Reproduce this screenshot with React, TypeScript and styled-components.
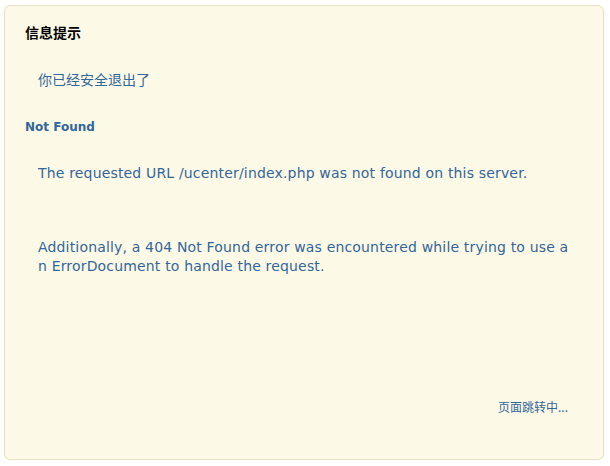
import styled, { createGlobalStyle } from 'styled-components';

const GlobalStyle = createGlobalStyle`
  html, body {
    margin: 0;
    padding: 0;
    background: #ffffff;
  }
  body {
    font-family: "DejaVu Sans", Verdana, "Noto Sans CJK SC", sans-serif;
  }
`;

const Page = styled.div`
  padding: 5px 0 0 4px;
`;

const MessageBox = styled.div`
  box-sizing: border-box;
  width: 600px;
  height: 455px;
  padding: 16px 20px 0 20px;
  display: flex;
  flex-direction: column;
  background: #fdf9e7;
  border: 1px solid #e6e1c6;
  border-radius: 6px;
`;

const Title = styled.h3`
  margin: 0;
  font-family: "Noto Sans CJK SC", sans-serif;
  font-size: 14px;
  line-height: 20px;
  font-weight: bold;
  color: #000;
`;

const Message = styled.div`
  margin: 27px 0 0 13px;
  font-family: "Noto Sans CJK SC", sans-serif;
  font-size: 14px;
  line-height: 20px;
  color: #336699;
`;

const Heading = styled.h1`
  margin: 30px 0 0 0;
  font-size: 12px;
  line-height: 16px;
  font-weight: bold;
  color: #336699;
`;

const Paragraph = styled.p<{ $gap: number }>`
  margin: ${(p) => p.$gap}px 0 0 13px;
  width: 534px;
  font-size: 14px;
  letter-spacing: 0.17px;
  line-height: 19px;
  color: #336699;
  word-break: break-all;
`;

const Redirect = styled.p`
  margin: 123px 15px 0 0;
  text-align: right;
  font-family: "Noto Sans CJK SC", sans-serif;
  font-size: 12px;
  line-height: 16px;
  color: #336699;
`;

export default function App() {
  return (
    <>
      <GlobalStyle />
      <Page>
        <MessageBox>
          <Title>信息提示</Title>
          <Message>你已经安全退出了</Message>
          <Heading>Not Found</Heading>
          <Paragraph $gap={29}>
            The requested URL /ucenter/index.php was not found on this server.
          </Paragraph>
          <Paragraph $gap={55}>
            Additionally, a 404 Not Found error was encountered while trying to use an ErrorDocument to handle the request.
          </Paragraph>
          <Redirect>页面跳转中...</Redirect>
        </MessageBox>
      </Page>
    </>
  );
}
